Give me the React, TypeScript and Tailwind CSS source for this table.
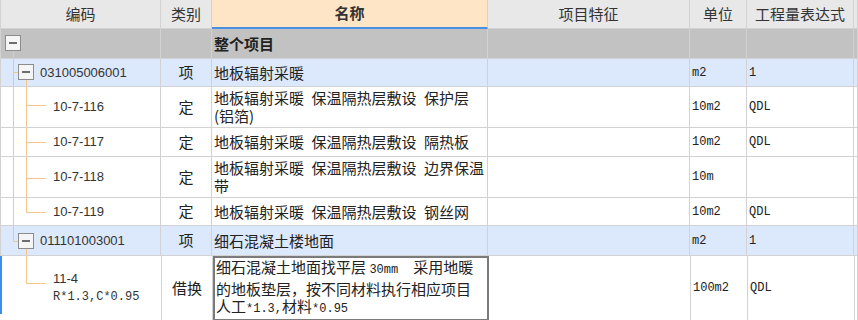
import React from 'react';

const LINE = '#f7c58a';
const cjk = "font-['Noto_Sans_CJK_SC',sans-serif]";
const mono = "font-['Liberation_Mono','Noto_Sans_CJK_SC',monospace]";
const sans = "font-['Liberation_Sans',sans-serif]";

const Box = ({ x, y }: { x: number; y: number }) => (
  <g>
    <rect x={x + 0.5} y={y + 0.5} width={15} height={15} fill="#f5f5f5" stroke="#8c8c8c" />
    <line x1={x + 4} x2={x + 12} y1={y + 8} y2={y + 8} stroke="#333" strokeWidth={1.4} />
  </g>
);

type TreeKind = 'root' | 'item1' | 'item2' | 'child' | 'lastChild' | 'tail';

const Tree = ({ kind, h, hy }: { kind: TreeKind; h: number; hy?: number }) => {
  const w = kind === 'root' ? 30 : kind === 'item1' || kind === 'item2' ? 38 : 51;
  const y = (hy ?? Math.round(h / 2)) + 0.5;
  return (
    <svg width={w} height={h} className="shrink-0 block">
      {kind === 'root' && (
        <>
          <line x1={12.5} x2={12.5} y1={22} y2={h} stroke={LINE} />
          <Box x={4} y={6} />
        </>
      )}
      {kind === 'item1' && (
        <>
          <line x1={12.5} x2={12.5} y1={0} y2={h} stroke={LINE} />
          <line x1={12.5} x2={17} y1={13.5} y2={13.5} stroke={LINE} />
          <line x1={25.5} x2={25.5} y1={21} y2={h} stroke={LINE} />
          <Box x={17} y={5} />
        </>
      )}
      {kind === 'item2' && (
        <>
          <line x1={12.5} x2={12.5} y1={0} y2={15.5} stroke={LINE} />
          <line x1={12.5} x2={17} y1={15.5} y2={15.5} stroke={LINE} />
          <line x1={25.5} x2={25.5} y1={23} y2={h} stroke={LINE} />
          <Box x={17} y={7} />
        </>
      )}
      {(kind === 'child' || kind === 'lastChild') && (
        <>
          <line x1={12.5} x2={12.5} y1={0} y2={h} stroke={LINE} />
          <line x1={25.5} x2={25.5} y1={0} y2={kind === 'lastChild' ? y : h} stroke={LINE} />
          <line x1={25.5} x2={45} y1={y} y2={y} stroke={LINE} />
        </>
      )}
      {kind === 'tail' && (
        <>
          <line x1={25.5} x2={25.5} y1={0} y2={y} stroke={LINE} />
          <line x1={25.5} x2={45} y1={y} y2={y} stroke={LINE} />
        </>
      )}
    </svg>
  );
};

const cols = 'grid grid-cols-[160px_51px_276px_202px_57px_107px_1fr]';
const cell = 'border-r border-b border-[#d2d2d2]';

type Row = {
  h: number;
  bg: string;
  tree: TreeKind;
  hy?: number;
  code: React.ReactNode;
  type: string;
  name: React.ReactNode;
  unit: string;
  expr: string;
};

const rows: Row[] = [
  { h: 30, bg: 'bg-[#c2c2c2]', tree: 'root', code: '', type: '', name: <span className="font-bold">整个项目</span>, unit: '', expr: '' },
  { h: 28, bg: 'bg-[#dce9fc]', tree: 'item1', code: '031005006001', type: '项', name: '地板辐射采暖', unit: 'm2', expr: '1' },
  {
    h: 41, bg: 'bg-white', tree: 'child', hy: 18, code: '10-7-116', type: '定',
    name: (<>地板辐射采暖&ensp;保温隔热层敷设&ensp;保护层<br />(铝箔)</>), unit: '10m2', expr: 'QDL',
  },
  { h: 29, bg: 'bg-white', tree: 'child', hy: 14, code: '10-7-117', type: '定', name: <>地板辐射采暖&ensp;保温隔热层敷设&ensp;隔热板</>, unit: '10m2', expr: 'QDL' },
  {
    h: 41, bg: 'bg-white', tree: 'child', hy: 21, code: '10-7-118', type: '定',
    name: (<>地板辐射采暖&ensp;保温隔热层敷设&ensp;边界保温<br />带</>), unit: '10m', expr: '',
  },
  { h: 28, bg: 'bg-white', tree: 'lastChild', hy: 14, code: '10-7-119', type: '定', name: <>地板辐射采暖&ensp;保温隔热层敷设&ensp;钢丝网</>, unit: '10m2', expr: 'QDL' },
  { h: 30, bg: 'bg-[#dce9fc]', tree: 'item2', code: '011101003001', type: '项', name: '细石混凝土楼地面', unit: 'm2', expr: '1' },
];

export default function App() {
  return (
    <div className={`w-[858px] h-[320px] bg-white overflow-hidden ${cjk} text-[#222]`}>
      {/* header */}
      <div className={`${cols} h-[29px] bg-[#e8e8e8] text-[15px] text-[#333] border-l border-[#d2d2d2]`}>
        <div className={`${cell} flex items-center justify-center`}>编码</div>
        <div className={`${cell} flex items-center justify-center`}>类别</div>
        <div className="border-r border-[#d2d2d2] border-b-2 border-b-[#4a90e2] bg-[#fde5c6] flex items-center justify-center font-bold">名称</div>
        <div className={`${cell} flex items-center justify-center`}>项目特征</div>
        <div className={`${cell} flex items-center justify-center`}>单位</div>
        <div className={`${cell} flex items-center justify-center`}>工程量表达式</div>
        <div className={cell}></div>
      </div>

      {rows.map((r, i) => (
        <div key={i} className={`${cols} ${r.bg} border-l border-[#d2d2d2]`} style={{ height: r.h }}>
          <div className={`${cell} flex items-stretch`}>
            <Tree kind={r.tree} h={r.h - 1} hy={r.hy} />
            <span className={`${sans} text-[13px] text-[#333] self-center ml-[1px]`}>{r.code}</span>
          </div>
          <div className={`${cell} flex items-center justify-center text-[15px]`}>{r.type}</div>
          <div className={`${cell} flex items-center pl-[2px] text-[15px] leading-[18px]`}>
            <div>{r.name}</div>
          </div>
          <div className={cell}></div>
          <div className={`${cell} flex items-center pl-[2px] ${mono} text-[12px]`}>{r.unit}</div>
          <div className={`${cell} flex items-center pl-[2px] ${mono} text-[12px]`}>{r.expr}</div>
          <div className={cell}></div>
        </div>
      ))}

      {/* last row, being edited */}
      <div className={`${cols} h-[58px] bg-white border-l-2 border-[#3d8ee8]`}>
        <div className={`${cell} flex items-stretch -ml-px`}>
          <Tree kind="tail" h={57} hy={27} />
          <div className="self-center ml-[1px] text-[#333] leading-[18px]">
            <div className={`${sans} text-[13px]`}>11-4</div>
            <div className={`${mono} text-[12px]`}>R*1.3,C*0.95</div>
          </div>
        </div>
        <div className={`${cell} flex items-center justify-center text-[15px]`}>借换</div>
        <div className="border-2 border-[#7b7b7b] flex items-center pl-[1px] text-[15px] leading-[17.5px]">
          <div>
            <div>细石混凝土地面找平层 <span className={`${mono} text-[12px]`}>30mm</span>&ensp;&ensp;采用地暖</div>
            <div>的地板垫层，按不同材料执行相应项目</div>
            <div>人工<span className={`${mono} text-[12px]`}>*1.3,</span>材料<span className={`${mono} text-[12px]`}>*0.95</span></div>
          </div>
        </div>
        <div className={cell}></div>
        <div className={`${cell} flex items-center pl-[2px] ${mono} text-[12px]`}>100m2</div>
        <div className={`${cell} flex items-center pl-[2px] ${mono} text-[12px]`}>QDL</div>
        <div className={cell}></div>
      </div>
    </div>
  );
}
